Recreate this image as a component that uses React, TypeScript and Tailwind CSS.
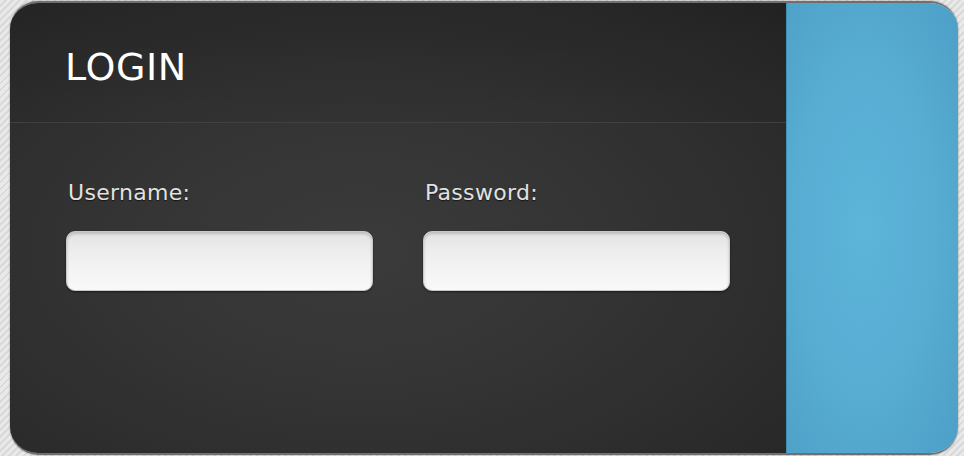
import React from 'react';

function Field({ label, type }: { label: string; type: string }) {
  return (
    <div className="flex flex-col w-[307px]">
      <label className="text-[22px] leading-none text-[#e2e2e2] pl-[2px] mb-[27px] tracking-[0.3px] [text-shadow:0_1px_1px_rgba(0,0,0,0.6)]">
        {label}
      </label>
      <input
        type={type}
        className="h-[60px] w-full rounded-[9px] border border-[#c9c9c9] bg-gradient-to-b from-[#e4e4e4] via-[#f1f1f1] to-[#f9f9f9] shadow-[inset_0_2px_3px_rgba(0,0,0,0.18),0_1px_2px_rgba(0,0,0,0.5)] outline-none px-3 text-[18px] text-[#333]"
      />
    </div>
  );
}

export default function App() {
  return (
    <div className="w-[964px] h-[456px] bg-[repeating-linear-gradient(135deg,#e9e9e9_0px,#e9e9e9_3px,#d9d9d9_3px,#d9d9d9_5px)] pt-[1px] pb-[1px] pl-[10px] pr-[6px] font-['DejaVu_Sans',sans-serif]">
      <div className="flex h-full rounded-[28px] overflow-hidden border-y-2 border-[#6f6f6f] shadow-[0_0_2px_rgba(0,0,0,0.4)]">
        {/* left dark panel */}
        <div className="flex-1 flex flex-col bg-[radial-gradient(ellipse_at_45%_55%,#3b3b3b_0%,#333333_45%,#262626_100%)]">
          <div className="h-[120px] flex items-center pl-[55px] pt-[8px] bg-[linear-gradient(to_bottom,rgba(0,0,0,0.1),rgba(0,0,0,0.04))] border-b border-[#404040]">
            <h1 className="text-[38px] leading-none text-white tracking-[0.6px]">LOGIN</h1>
          </div>
          <div className="flex gap-[50px] pl-[56px] pt-[59px]">
            <Field label="Username:" type="text" />
            <Field label="Password:" type="password" />
          </div>
        </div>
        {/* right blue panel */}
        <div className="w-[172px] bg-[radial-gradient(ellipse_at_45%_50%,#5db5da_0%,#57acd2_55%,#4c9fc6_100%)] border-l border-[#3f8fb5]" />
      </div>
    </div>
  );
}
